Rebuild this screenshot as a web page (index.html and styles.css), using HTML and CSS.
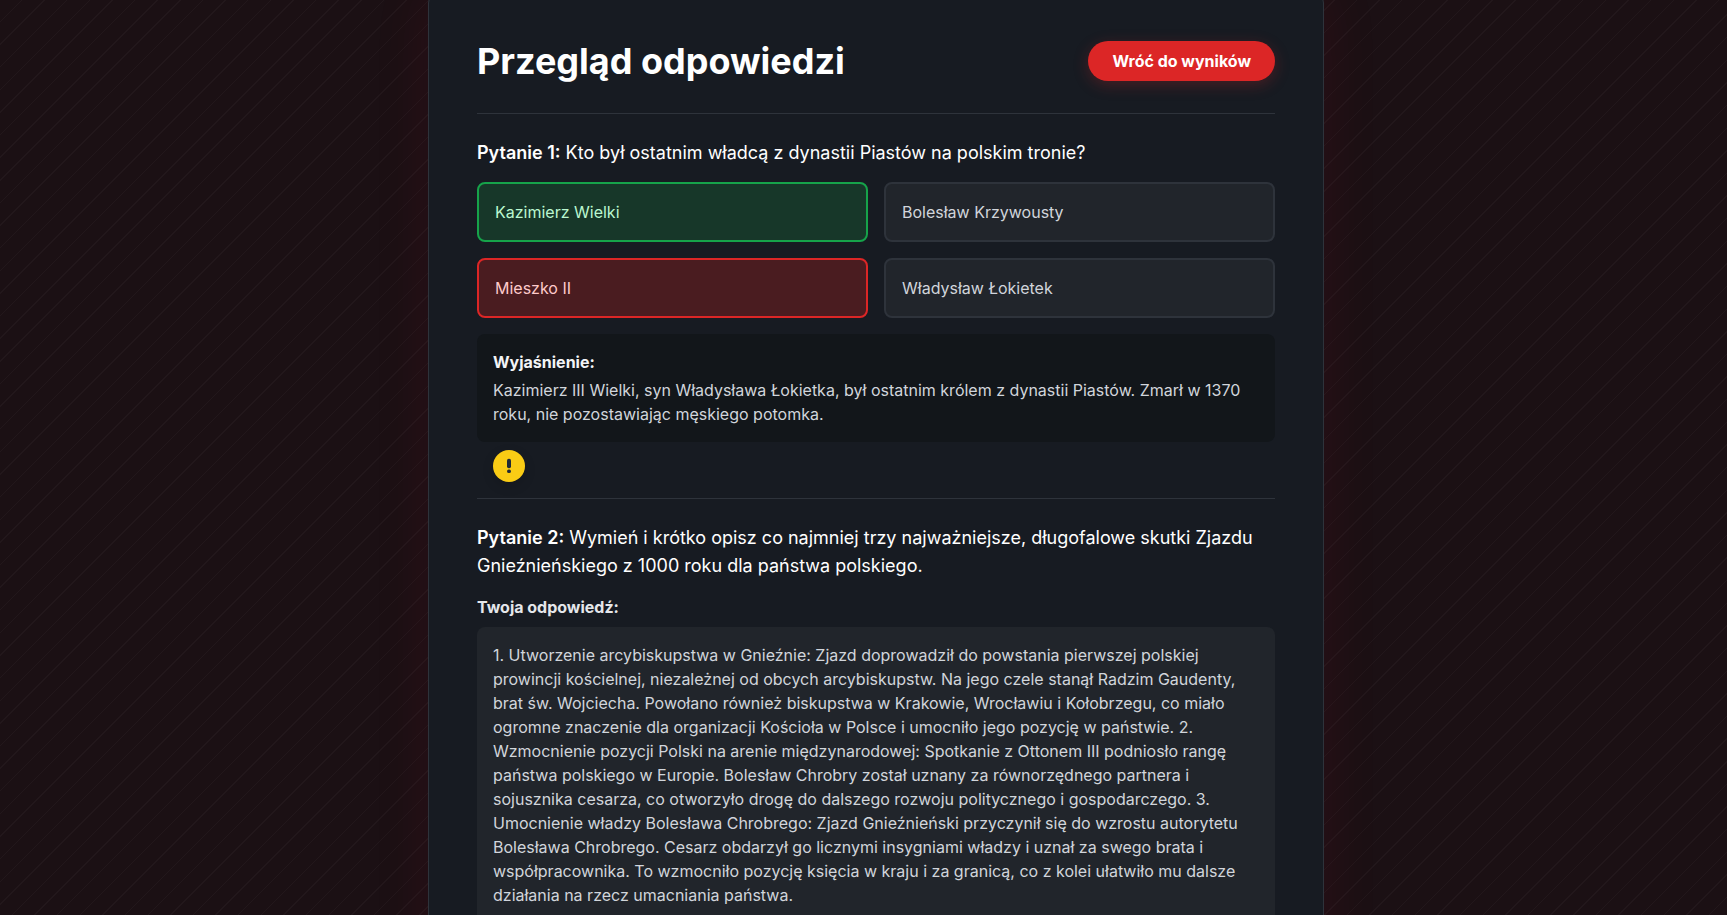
FILE: index.html
```html
<!DOCTYPE html>
<html lang="pl">
<head>
<meta charset="utf-8">
<title>Przegląd odpowiedzi</title>
<link rel="stylesheet" href="styles.css">
</head>
<body>
<main class="panel">
  <header class="header">
    <h1 class="title">Przegląd odpowiedzi</h1>
    <button class="back">Wróć do wyników</button>
  </header>
  <section class="question">
    <p class="prompt"><strong>Pytanie 1:</strong> Kto był ostatnim władcą z dynastii Piastów na polskim tronie?</p>
    <div class="options">
      <div class="option correct">Kazimierz Wielki</div>
      <div class="option">Bolesław Krzywousty</div>
      <div class="option wrong">Mieszko II</div>
      <div class="option">Władysław Łokietek</div>
    </div>
    <div class="explanation">
      <p class="label">Wyjaśnienie:</p>
      <p>Kazimierz III Wielki, syn Władysława Łokietka, był ostatnim królem z dynastii Piastów. Zmarł w 1370 roku, nie pozostawiając męskiego potomka.</p>
    </div>
    <button class="report">
      <svg width="20" height="20" viewBox="0 0 20 20"><rect x="8" y="2.8" width="4" height="9.4" rx="1.8"/><rect x="8.1" y="13.5" width="3.8" height="3.6" rx="1.6"/></svg>
    </button>
  </section>
  <section class="question">
    <p class="prompt"><strong>Pytanie 2:</strong> Wymień i krótko opisz co najmniej trzy najważniejsze, długofalowe skutki Zjazdu Gnieźnieńskiego z 1000 roku dla państwa polskiego.</p>
    <p class="answer-label">Twoja odpowiedź:</p>
    <div class="answer">1. Utworzenie arcybiskupstwa w Gnieźnie: Zjazd doprowadził do powstania pierwszej polskiej prowincji kościelnej, niezależnej od obcych arcybiskupstw. Na jego czele stanął Radzim Gaudenty, brat św. Wojciecha. Powołano również biskupstwa w Krakowie, Wrocławiu i Kołobrzegu, co miało ogromne znaczenie dla organizacji Kościoła w Polsce i umocniło jego pozycję w państwie. 2. Wzmocnienie pozycji Polski na arenie międzynarodowej: Spotkanie z Ottonem III podniosło rangę państwa polskiego w Europie. Bolesław Chrobry został uznany za równorzędnego partnera i sojusznika cesarza, co otworzyło drogę do dalszego rozwoju politycznego i gospodarczego. 3. Umocnienie władzy Bolesława Chrobrego: Zjazd Gnieźnieński przyczynił się do wzrostu autorytetu Bolesława Chrobrego. Cesarz obdarzył go licznymi insygniami władzy i uznał za swego brata i współpracownika. To wzmocniło pozycję księcia w kraju i za granicą, co z kolei ułatwiło mu dalsze działania na rzecz umacniania państwa.</div>
  </section>
</main>
</body>
</html>
```
FILE: styles.css
```css
* { box-sizing: border-box; margin: 0; }
html { height: 100%; overflow: hidden; }
body {
  height: 100%;
  overflow: hidden;
  background: repeating-linear-gradient(135deg, transparent 0 15px, rgba(255,255,255,.03) 15px 16px) #1b1014;
  color: #fff;
  font: 16px/24px Inter, sans-serif;
}
.panel {
  width: 896px;
  height: 1100px;
  margin: -13px 0 0 428px;
  padding: 52px 48px 0;
  border: 1px solid #2e333b;
  border-radius: 16px;
  background: #171b22;
  box-shadow: 0 0 60px rgba(220,20,60,.09);
}
.header {
  display: flex;
  align-items: center;
  justify-content: space-between;
  height: 74px;
  padding-bottom: 31px;
  border-bottom: 1px solid #2e333b;
}
.title { font-size: 36px; line-height: 40px; font-weight: 700; }
.back {
  height: 40px;
  padding: 8px 24px;
  border: 0;
  border-radius: 20px;
  background: #dc2626;
  color: #fff;
  font: 700 16px/24px Inter, sans-serif;
  box-shadow: 0 4px 15px rgba(220,38,38,.25);
}
.question { padding: 25px 0 16px; border-bottom: 1px solid #2e333b; }
.prompt { margin-bottom: 15px; font-size: 18px; line-height: 28px; }
.prompt strong { font-weight: 600; }
.options { display: grid; grid-template-columns: 1fr 1fr; gap: 16px; }
.option {
  padding: 16px;
  border: 2px solid #2e333b;
  border-radius: 8px;
  background: #21252b;
  color: #d1d5db;
}
.correct { border-color: #16a34a; background: #173729; color: #bbf7d0; }
.wrong { border-color: #dc2626; background: #4a1c20; color: #fecaca; }
.explanation {
  margin-top: 16px;
  padding: 16px;
  border-radius: 8px;
  background: #12161a;
  color: #d1d5db;
}
.label { margin-bottom: 4px; color: #f3f4f6; font-weight: 700; }
.report {
  display: flex;
  align-items: center;
  justify-content: center;
  width: 32px;
  height: 32px;
  margin: 8px 0 0 16px;
  padding: 0;
  border: 0;
  border-radius: 50%;
  background: #facc15;
  box-shadow: 0 4px 12px rgba(0,0,0,.15);
}
.report svg { fill: #1f2937; }
.answer-label { margin-bottom: 8px; font-weight: 700; color: #e5e7eb; }
.answer { padding: 16px; border-radius: 8px; background: #21252b; color: #d1d5db; }
```
